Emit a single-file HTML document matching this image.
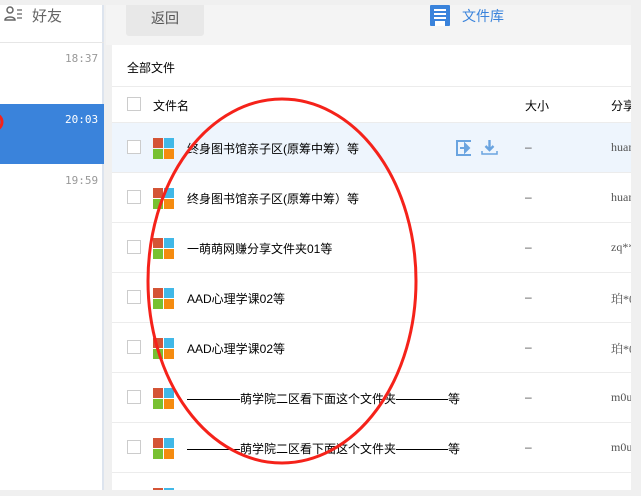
<!DOCTYPE html>
<html><head><meta charset="utf-8"><style>
*{margin:0;padding:0;box-sizing:border-box}
body{width:641px;height:496px;overflow:hidden;background:#f0f0f0;font-family:"Liberation Sans","Noto Sans CJK SC",sans-serif;font-size:12px;color:#000;position:relative}
.abs{position:absolute}
.side{left:0;top:5px;width:104px;height:491px;background:#fff;border-right:2px solid #dde4ee}
.main{left:112px;top:5px;width:519px;height:485px;background:#fff}
.top{left:106px;top:5px;width:525px;height:40px;background:#f4f4f4}
.row{position:absolute;left:112px;width:519px;height:50px;border-bottom:1px solid #ececec}
.cb{position:absolute;left:15px;top:17px;width:14px;height:14px;border:1px solid #ccc;background:#fff}
.ic{position:absolute;left:41px;top:15px;width:22px;height:22px}
.ic i{position:absolute;width:10px;height:10px}
.nm{position:absolute;left:75px;top:17px;font-size:12px;white-space:nowrap}
.sz{position:absolute;left:413px;top:17px;color:#555}
.sh{position:absolute;left:499px;top:17px;color:#555;font-family:"Liberation Serif","Noto Serif CJK SC",serif;white-space:nowrap;width:20px;overflow:hidden}
.ln{display:inline-block;height:1px;background:#000;vertical-align:middle}
</style></head><body>
<div class="abs side"></div>
<svg class="abs" style="left:4px;top:6px" width="20" height="16" viewBox="0 0 20 16"><circle cx="6" cy="4" r="3" fill="none" stroke="#666" stroke-width="1.5"/><path d="M1 14c0-4 10-4 10 0z" fill="none" stroke="#666" stroke-width="1.5"/><path d="M13 4h5M13 8h5M13 12h5" stroke="#666" stroke-width="1.3"/></svg>
<div class="abs" style="left:32px;top:5px;font-size:15px;color:#666">好友</div>
<div class="abs" style="left:0;top:42px;width:104px;height:1px;background:#e6e6e6"></div>
<div class="abs" style="left:65px;top:52px;color:#999;font-size:11px;font-family:'DejaVu Sans Mono',monospace">18:37</div>
<div class="abs" style="left:0;top:104px;width:104px;height:60px;background:#3a83db"></div>
<div class="abs" style="left:65px;top:113px;color:#fff;font-size:11px;font-family:'DejaVu Sans Mono',monospace">20:03</div>
<div class="abs" style="left:65px;top:174px;color:#999;font-size:11px;font-family:'DejaVu Sans Mono',monospace">19:59</div>
<div class="abs main"></div>
<div class="abs top"></div>
<div class="abs" style="left:126px;top:5px;width:78px;height:31px;background:#e8e8e8;border-radius:0 0 3px 3px;text-align:center;line-height:26px;font-size:14px;color:#555">返回</div>
<svg class="abs" style="left:430px;top:5px" width="20" height="21" viewBox="0 0 20 21"><rect x="0" y="0" width="20" height="21" rx="1" fill="#3a83db"/><path d="M4 5h12M4 9h12M4 13h12" stroke="#fff" stroke-width="2"/><rect x="5" y="16" width="10" height="5" fill="#fff"/></svg>
<div class="abs" style="left:462px;top:6px;font-size:14px;color:#3a83db">文件库</div>
<div class="abs" style="left:127px;top:59px">全部文件</div>
<div class="abs" style="left:112px;top:86px;width:519px;height:1px;background:#ececec"></div>
<div class="row" style="top:87px;height:36px"><div class="cb" style="top:10px"></div><div class="nm" style="left:41px;top:10px">文件名</div><div class="sz" style="top:10px;color:#000">大小</div><div class="sh" style="top:10px;color:#000;font-family:'Liberation Sans','Noto Sans CJK SC',sans-serif">分享</div></div>
<div class="row" style="top:123px;background:#eef5fd"><div class="cb"></div><div class="ic"><i style="left:0;top:0;background:#d45436"></i><i style="left:11px;top:0;background:#41b8e7"></i><i style="left:0;top:11px;background:#78c131"></i><i style="left:11px;top:11px;background:#f58b0f"></i></div><div class="nm">终身图书馆亲子区(原筹中筹）等</div>
<svg style="position:absolute;left:344px;top:17px" width="17" height="16" viewBox="0 0 17 16"><path d="M15 1H1v14h14" fill="none" stroke="#6aa4e0" stroke-width="2"/><path d="M4 8h7M9 4l4 4-4 4z" stroke="#6aa4e0" stroke-width="2" fill="#6aa4e0"/></svg>
<svg style="position:absolute;left:369px;top:16px" width="17" height="17" viewBox="0 0 17 17"><path d="M8.5 1v9M4.5 7l4 4 4-4" stroke="#6aa4e0" stroke-width="2.4" fill="none"/><path d="M1 12v3h15v-3" stroke="#6aa4e0" stroke-width="1.5" fill="none"/></svg>
<div class="sz">–</div><div class="sh">huan</div></div>
<div class="row" style="top:173px"><div class="cb"></div><div class="ic"><i style="left:0;top:0;background:#d45436"></i><i style="left:11px;top:0;background:#41b8e7"></i><i style="left:0;top:11px;background:#78c131"></i><i style="left:11px;top:11px;background:#f58b0f"></i></div><div class="nm">终身图书馆亲子区(原筹中筹）等</div><div class="sz">–</div><div class="sh">huan</div></div>
<div class="row" style="top:223px"><div class="cb"></div><div class="ic"><i style="left:0;top:0;background:#d45436"></i><i style="left:11px;top:0;background:#41b8e7"></i><i style="left:0;top:11px;background:#78c131"></i><i style="left:11px;top:11px;background:#f58b0f"></i></div><div class="nm">一萌萌网赚分享文件夹01等</div><div class="sz">–</div><div class="sh">zq**</div></div>
<div class="row" style="top:273px"><div class="cb"></div><div class="ic"><i style="left:0;top:0;background:#d45436"></i><i style="left:11px;top:0;background:#41b8e7"></i><i style="left:0;top:11px;background:#78c131"></i><i style="left:11px;top:11px;background:#f58b0f"></i></div><div class="nm">AAD心理学课02等</div><div class="sz">–</div><div class="sh">珀*0</div></div>
<div class="row" style="top:323px"><div class="cb"></div><div class="ic"><i style="left:0;top:0;background:#d45436"></i><i style="left:11px;top:0;background:#41b8e7"></i><i style="left:0;top:11px;background:#78c131"></i><i style="left:11px;top:11px;background:#f58b0f"></i></div><div class="nm">AAD心理学课02等</div><div class="sz">–</div><div class="sh">珀*0</div></div>
<div class="row" style="top:373px"><div class="cb"></div><div class="ic"><i style="left:0;top:0;background:#d45436"></i><i style="left:11px;top:0;background:#41b8e7"></i><i style="left:0;top:11px;background:#78c131"></i><i style="left:11px;top:11px;background:#f58b0f"></i></div><div class="nm"><span class="ln" style="width:53px"></span>萌学院二区看下面这个文件夹<span class="ln" style="width:52px"></span>等</div><div class="sz">–</div><div class="sh">m0u</div></div>
<div class="row" style="top:423px"><div class="cb"></div><div class="ic"><i style="left:0;top:0;background:#d45436"></i><i style="left:11px;top:0;background:#41b8e7"></i><i style="left:0;top:11px;background:#78c131"></i><i style="left:11px;top:11px;background:#f58b0f"></i></div><div class="nm"><span class="ln" style="width:53px"></span>萌学院二区看下面这个文件夹<span class="ln" style="width:52px"></span>等</div><div class="sz">–</div><div class="sh">m0u</div></div>
<div class="row" style="top:473px;border:none;height:17px;overflow:hidden"><div class="ic" style="top:15px"><i style="left:0;top:0;background:#d45436"></i><i style="left:11px;top:0;background:#41b8e7"></i></div></div>
<div class="abs" style="left:0;top:490px;width:641px;height:6px;background:#f0f0f0"></div>
<div class="abs" style="left:0;top:0;width:641px;height:5px;background:#f0f0f0"></div>
<svg class="abs" style="left:0;top:0" width="641" height="496"><ellipse cx="282" cy="281" rx="134" ry="182" fill="none" stroke="#f5221a" stroke-width="3"/><circle cx="-6" cy="122" r="8" fill="none" stroke="#f5221a" stroke-width="3"/></svg>
</body></html>
